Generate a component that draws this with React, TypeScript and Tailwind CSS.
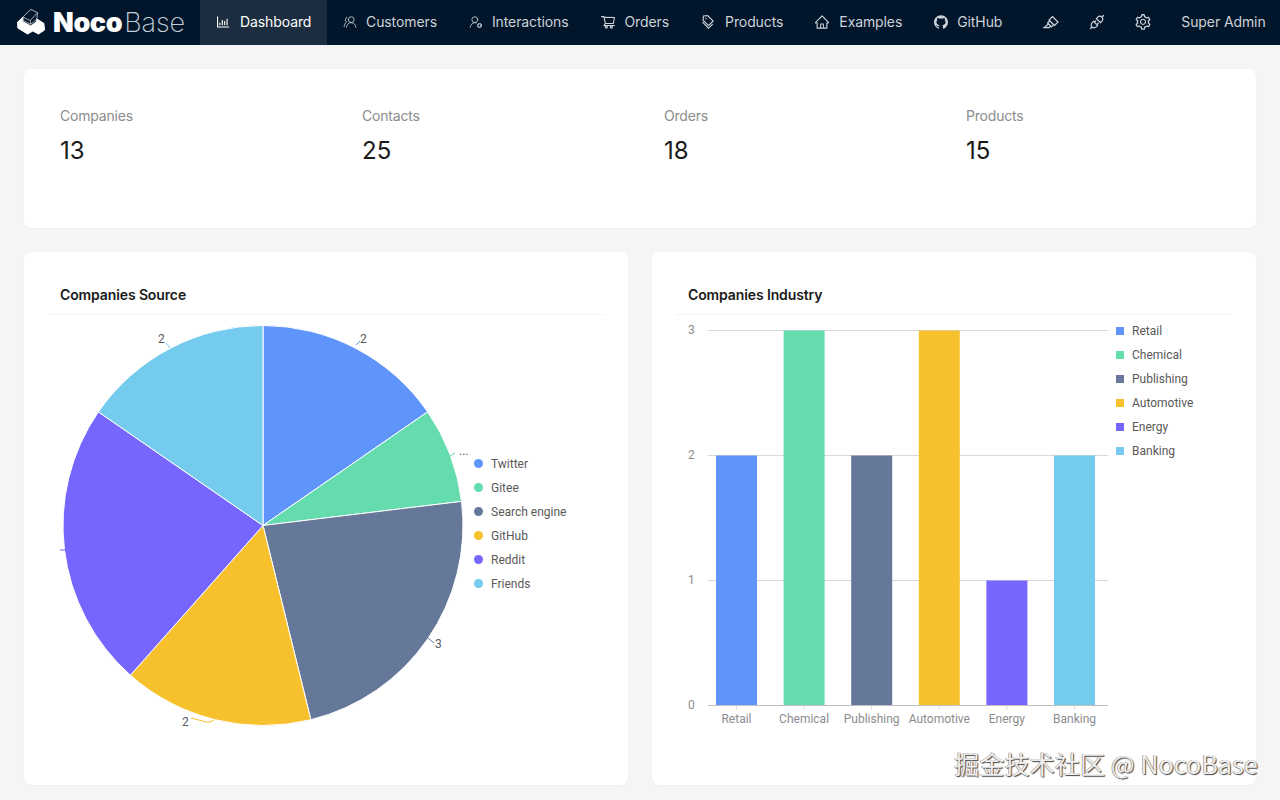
import type { ReactNode } from "react";
import { AiFillGithub, AiOutlineApi, AiOutlineBarChart, AiOutlineHighlight, AiOutlineHome, AiOutlineSetting, AiOutlineShoppingCart, AiOutlineTags } from "react-icons/ai";
import { UserRoundCog, UsersRound } from "lucide-react";

const colors = ["#5f94fb", "#64dcae", "#65789a", "#f6c12d", "#7666fd", "#74cbee"];
const industry = ["Retail", "Chemical", "Publishing", "Automotive", "Energy", "Banking"];
const source = ["Twitter", "Gitee", "Search engine", "GitHub", "Reddit", "Friends"];
const pieValues = [2, 1, 3, 2, 3, 2];
const barValues = [2, 3, 2, 3, 1, 2];

const iconClass = "-mx-[1px] size-[16px]";

function NavItem({ icon, label, wide }: { icon: ReactNode; label: string; wide?: boolean }) {
  return (
    <div className={`flex h-full items-center px-[16px] pb-[2px] ${wide ? "gap-[10px]" : "gap-[9px]"}`}>
      {icon}
      <span>{label}</span>
    </div>
  );
}

function Pie() {
  const cx = 215;
  const cy = 210.5;
  const r = 200;
  let start = 0;
  const slices = pieValues.map((v, i) => {
    const end = start + (v / 13) * Math.PI * 2;
    const p = (a: number) => `${cx + r * Math.sin(a)} ${cy - r * Math.cos(a)}`;
    const d = `M${cx} ${cy}L${p(start)}A${r} ${r} 0 0 1 ${p(end)}Z`;
    start = end;
    return <path key={i} d={d} fill={colors[i]} stroke="#fff" strokeWidth="1" />;
  });
  const label = "fill-[#595959] text-[12px] [font-family:Roboto,sans-serif]";
  return (
    <svg width="425" height="427" className="shrink-0">
      {slices}
      <path d="M308 30 L312 26" stroke={colors[0]} fill="none" />
      <text x="312" y="28" className={label}>2</text>
      <path d="M402 141 L407 138" stroke={colors[1]} fill="none" />
      <text x="411" y="140" className={label}>...</text>
      <path d="M380 323 L386 328" stroke={colors[2]} fill="none" />
      <text x="387" y="333" className={label}>3</text>
      <path d="M143 403 L158 407 Q162 408 166 405" stroke={colors[3]} fill="none" />
      <text x="134" y="411" className={label}>2</text>
      <path d="M12 235 L17 235" stroke={colors[4]} fill="none" />
      <path d="M122 33 L118 28" stroke={colors[5]} fill="none" />
      <text x="110" y="28" className={label}>2</text>
    </svg>
  );
}

function Bars() {
  const x0 = 32;
  const bottom = 390.5;
  const unit = 125;
  const step = 67.6;
  const tick = "fill-[#8c8c8c] text-[12px] [font-family:Roboto,sans-serif]";
  return (
    <svg width="440" height="420" className="shrink-0">
      {[1, 2, 3].map((n) => (
        <line key={n} x1={x0} x2="432" y1={bottom - unit * n} y2={bottom - unit * n} stroke="#d9d9d9" />
      ))}
      {[0, 1, 2, 3].map((n) => (
        <text key={n} x="12" y={bottom - unit * n + 3} className={tick}>{n}</text>
      ))}
      {barValues.map((v, i) => (
        <rect key={i} x={x0 + 8 + step * i} y={bottom - unit * v} width="41" height={unit * v} fill={colors[i]} />
      ))}
      <line x1={x0} x2="432" y1={bottom} y2={bottom} stroke="#bfbfbf" />
      {industry.map((t, i) => (
        <g key={t}>
          <line x1={x0 + 28.5 + step * i} x2={x0 + 28.5 + step * i} y1={bottom} y2={bottom + 4} stroke="#d9d9d9" />
          <text x={x0 + 28.5 + step * i} y={bottom + 17} textAnchor="middle" className={tick}>{t}</text>
        </g>
      ))}
    </svg>
  );
}

function Legend({ items, round }: { items: string[]; round?: boolean }) {
  return (
    <div className="flex flex-col gap-[8px] font-['Roboto',sans-serif] text-[12px] leading-[16px] text-[#595959]">
      {items.map((t, i) => (
        <div key={t} className="flex items-center gap-[8px]">
          <span
            className={round ? "size-[9px] rounded-full" : "size-[8px]"}
            style={{ backgroundColor: colors[i] }}
          />
          <span>{t}</span>
        </div>
      ))}
    </div>
  );
}

function Stat({ label, value }: { label: string; value: string }) {
  return (
    <div className="w-[302px] shrink-0">
      <div className="text-[14px] leading-[22px] tracking-[-0.2px] text-[#8c8c8c]">{label}</div>
      <div className="mt-[8px] text-[24px] leading-[32px] text-[#1a1a1a]">{value}</div>
    </div>
  );
}

function Card({ title, children }: { title: string; children: ReactNode }) {
  return (
    <div className="h-[533px] flex-1 rounded-[8px] bg-white px-[24px] pt-[32px] shadow-[0_1px_2px_rgba(0,0,0,0.03)]">
      <div className="border-b border-[#f3f3f3] px-[12px] pb-[8px] text-[14px] font-semibold leading-[22px] tracking-[-0.12px] text-[#1a1a1a]">{title}</div>
      {children}
    </div>
  );
}

export default function App() {
  return (
    <div className="relative h-[800px] w-[1280px] overflow-hidden bg-[#f5f5f5] font-['Inter',sans-serif]">
      <header className="flex h-[45px] items-center bg-[#02162b] text-[14px] tracking-[-0.1px] text-[#ccd2d8]">
        <div className="flex w-[200px] items-center pl-[15px]">
          <svg width="37" height="35" viewBox="15 0 110 105" className="shrink-0">
            <path d="M22 52 L38 36 L38 50 L62 63 L79 50 L80 42 L101 55 L103 75 L85 87 L68 78 L52 87 L23 69Z" fill="#fff" stroke="#fff" strokeWidth="3" strokeLinejoin="round" />
            <path d="M38 36 L62 13 L82 23 L80 42 L62 58 L38 46Z M38 36 L60 47 L82 23 M60 47 L62 58" fill="none" stroke="#c6ccd2" strokeWidth="2.5" strokeLinejoin="round" />
          </svg>
          <span className="ml-[1px] text-[27px] font-black leading-none tracking-[-0.4px] text-white">Noco</span>
          <span className="ml-[2px] text-[27px] font-extralight leading-none text-[#c3ced8]">Base</span>
        </div>
        <div className="flex h-full w-[127px] items-center gap-[10px] bg-[#1b2d3e] pb-[2px] pl-[16px] text-white">
          <AiOutlineBarChart className={iconClass} />
          <span>Dashboard</span>
        </div>
        <NavItem label="Customers" icon={<UsersRound className="size-[14px] -scale-x-100" strokeWidth={1.4} />} />
        <NavItem label="Interactions" icon={<UserRoundCog className="size-[14px]" strokeWidth={1.4} />} />
        <NavItem label="Orders" wide icon={<AiOutlineShoppingCart className={iconClass} />} />
        <NavItem label="Products" wide icon={<AiOutlineTags className={`${iconClass} -scale-x-100`} />} />
        <NavItem label="Examples" wide icon={<AiOutlineHome className={iconClass} />} />
        <NavItem label="GitHub" icon={<AiFillGithub className={iconClass} />} />
        <div className="ml-[25px] flex items-center gap-[30px] pb-[2px]">
          <AiOutlineHighlight className="-mx-[1px] size-[18px]" />
          <AiOutlineApi className="-mx-[1px] size-[18px]" />
          <AiOutlineSetting className="-mx-[1px] size-[18px]" />
        </div>
        <span className="mb-[3px] ml-[30px]">Super Admin</span>
      </header>
      <main className="flex flex-col gap-[24px] p-[24px]">
        <section className="flex h-[159px] rounded-[8px] bg-white pl-[36px] pt-[36px] shadow-[0_1px_2px_rgba(0,0,0,0.03)]">
          <Stat label="Companies" value="13" />
          <Stat label="Contacts" value="25" />
          <Stat label="Orders" value="18" />
          <Stat label="Products" value="15" />
        </section>
        <div className="flex gap-[24px]">
          <Card title="Companies Source">
            <div className="flex items-center">
              <Pie />
              <div className="ml-[1px] -mt-[10px]"><Legend items={source} round /></div>
            </div>
          </Card>
          <Card title="Companies Industry">
            <div className="flex items-start">
              <Bars />
              <div className="pt-[8px]"><Legend items={industry} /></div>
            </div>
          </Card>
        </div>
      </main>
      <div className="absolute left-[954px] top-[747px] font-['Noto_Sans_CJK_SC',sans-serif] text-[25.2px] leading-[32px] text-[#eeeeee] [text-shadow:1px_1px_1px_#444,-0.5px_-0.5px_0.5px_#777]">
        掘金技术社区 @ NocoBase
      </div>
    </div>
  );
}
